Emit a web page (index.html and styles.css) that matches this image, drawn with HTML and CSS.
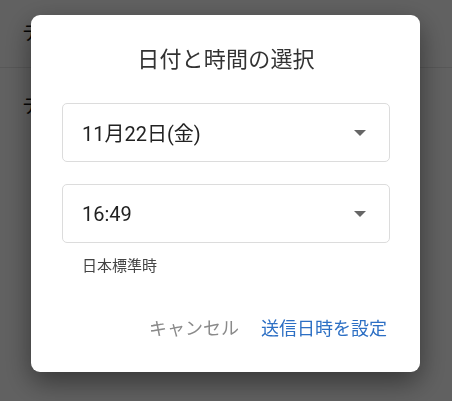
FILE: index.html
```html
<!DOCTYPE html>
<html lang="ja">
<head>
    <meta charset="UTF-8">
    <title>日付と時間の選択</title>
    <link rel="stylesheet" href="styles.css">
</head>
<body>
<div class="page">
    <div class="header"><span>テスト送信</span></div>
    <div class="content"><span>テスト本文</span></div>
</div>

<div class="scrim">
    <div class="dialog">
        <h1 class="title">日付と時間の選択</h1>
        <div class="field">
            <span>11月22日(金)</span>
            <em class="arrow"></em>
        </div>
        <div class="field second">
            <span>16:49</span>
            <em class="arrow"></em>
        </div>
        <p class="hint">日本標準時</p>
        <div class="actions">
            <span class="btn cancel">キャンセル</span>
            <span class="btn ok">送信日時を設定</span>
        </div>
    </div>
</div>
</body>
</html>
```

FILE: styles.css
```css
* {
    margin: 0;
    padding: 0;
    box-sizing: border-box;
}

body {
    width: 452px;
    height: 401px;
    overflow: hidden;
    background: #ffffff;
    font-family: Roboto, "Noto Sans CJK JP", sans-serif;
}

.page .header {
    height: 68px;
    padding: 21px 22px 0;
    border-bottom: 1px solid #e6e6e6;
    font-size: 19px;
    line-height: 26px;
    color: #111111;
}

.page .content {
    padding: 26px 22px 0;
    font-size: 19px;
    line-height: 26px;
    color: #111111;
}

/* 遮罩层覆盖在页面上 */
.scrim {
    position: fixed;
    top: 0;
    left: 0;
    right: 0;
    bottom: 0;
    display: flex;
    align-items: flex-start;
    padding: 15px 0 0 31px;
    background: rgba(0, 0, 0, 0.62);
}

.dialog {
    width: 389px;
    height: 357px;
    padding: 30px 30px 0 31px;
    background: #ffffff;
    border-radius: 9px;
    box-shadow: 0 10px 28px rgba(0, 0, 0, 0.45);
}

.title {
    font-size: 22px;
    font-weight: 400;
    line-height: 30px;
    text-align: center;
    color: #333333;
    letter-spacing: 0.2px;
}

.field {
    display: flex;
    align-items: center;
    justify-content: space-between;
    height: 59px;
    margin-top: 28px;
    padding: 0 23px 0 19px;
    border: 1px solid #dcdcdc;
    border-radius: 5px;
    font-size: 20px;
    color: #222222;
}

.field.second {
    margin-top: 22px;
}

.field .arrow {
    width: 0;
    height: 0;
    border-left: 6px solid transparent;
    border-right: 6px solid transparent;
    border-top: 6px solid #666666;
}

.hint {
    margin-top: 13px;
    padding-left: 20px;
    font-size: 15px;
    line-height: 20px;
    color: #444444;
}

.actions {
    display: flex;
    justify-content: flex-end;
    gap: 22px;
    margin-top: 41px;
    padding-right: 3px;
    font-size: 18px;
    line-height: 24px;
}

.btn.cancel {
    color: #8a8a8a;
}

.btn.ok {
    color: #2c6fc4;
}
```
